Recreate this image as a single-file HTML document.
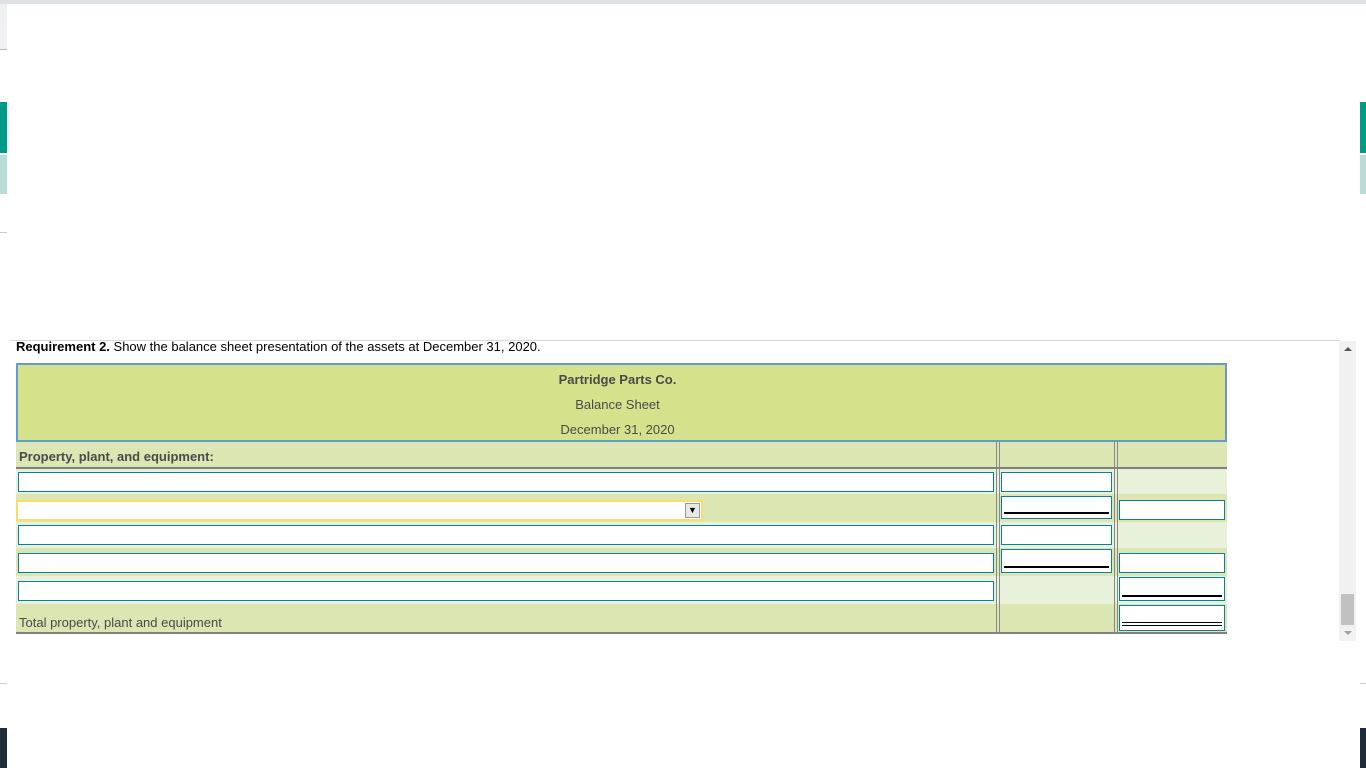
<!DOCTYPE html>
<html><head><style>
body{margin:0;width:1366px;height:768px;position:relative;overflow:hidden;background:#fff;font-family:"Liberation Sans",Arial,sans-serif;}
div{position:absolute;box-sizing:border-box;}
.in{background:#fff;border:1px solid #0e7f9a;}
.ul{border-bottom:2px solid #000;}
.t{font-size:13px;color:#4a4a4a;}
</style></head><body>
<div style="left:0;top:0;width:1366px;height:4px;background:#dee1e6"></div>
<div style="left:0;top:4px;width:7px;height:20px;background:#eef0f2"></div>
<div style="left:0;top:23px;width:7px;height:27px;background:#f0f1f3;border-bottom:1px solid #bbb"></div>
<div style="left:0;top:102px;width:7px;height:51px;background:#009b86"></div>
<div style="left:0;top:155px;width:7px;height:39px;background:#b9dcd6"></div>
<div style="left:0;top:232px;width:7px;height:1px;background:#ccc"></div>
<div style="left:1360px;top:102px;width:6px;height:51px;background:#009b86"></div>
<div style="left:1360px;top:155px;width:6px;height:39px;background:#b9dcd6"></div>
<div style="left:0;top:728px;width:7px;height:40px;background:#1e2b38"></div>
<div style="left:1360px;top:728px;width:6px;height:40px;background:#1e2b38"></div>
<div style="left:0;top:683px;width:7px;height:1px;background:#ccc"></div>
<div style="left:1360px;top:683px;width:6px;height:1px;background:#ccc"></div>

<div style="left:10px;top:340px;width:1330px;height:1px;background:#d5d9e0"></div>
<div style="left:16px;top:339px;font-size:13px;color:#000;line-height:15px"><b>Requirement 2.</b> Show the balance sheet presentation of the assets at December 31, 2020.</div>

<div style="left:1339px;top:341px;width:17px;height:300px;background:#f1f1f1"></div>
<div style="left:1341px;top:594px;width:13px;height:31px;background:#c1c1c1"></div>
<div style="left:1344px;top:347px;width:0;height:0;border-left:4px solid transparent;border-right:4px solid transparent;border-bottom:4px solid #555"></div>
<div style="left:1344px;top:631px;width:0;height:0;border-left:4px solid transparent;border-right:4px solid transparent;border-top:4px solid #a0a0a0"></div>

<div style="left:16px;top:363px;width:1211px;height:79px;background:#d6e18c;border:2px solid #6699cc"></div>
<div class="t" style="left:12px;width:1211px;top:372px;text-align:center;font-weight:bold">Partridge Parts Co.</div>
<div class="t" style="left:12px;width:1211px;top:397px;text-align:center">Balance Sheet</div>
<div class="t" style="left:12px;width:1211px;top:422px;text-align:center">December 31, 2020</div>

<div style="left:16px;top:442px;width:1211px;height:25px;background:#dbe6b2"></div>
<div style="left:16px;top:467px;width:1211px;height:2px;background:#808080"></div>
<div style="left:16px;top:469px;width:1211px;height:25px;background:#e8f1d9"></div>
<div style="left:16px;top:494px;width:1211px;height:28px;background:#dbe6b2"></div>
<div style="left:16px;top:522px;width:1211px;height:26px;background:#e8f1d9"></div>
<div style="left:16px;top:548px;width:1211px;height:28px;background:#dbe6b2"></div>
<div style="left:16px;top:576px;width:1211px;height:28px;background:#e8f1d9"></div>
<div style="left:16px;top:604px;width:1211px;height:29px;background:#dbe6b2"></div>
<div style="left:16px;top:632px;width:1211px;height:2px;background:#808080"></div>
<div style="left:996px;top:442px;width:4px;height:191px;border-left:1px solid #888;border-right:1px solid #888"></div>
<div style="left:1114px;top:442px;width:4px;height:191px;border-left:1px solid #888;border-right:1px solid #888"></div>

<div class="t" style="left:19px;top:449px;font-weight:bold">Property, plant, and equipment:</div>
<div class="t" style="left:19px;top:615px">Total property, plant and equipment</div>

<div class="in" style="left:18px;top:472px;width:976px;height:20px"></div>
<div class="in" style="left:1001px;top:472px;width:111px;height:20px"></div>

<div style="left:16px;top:500px;width:687px;height:21px;background:#fff;border:2px solid #f7de6a"></div>
<div style="left:685px;top:503px;width:15px;height:15px;background:#e8e8e8;border:1px solid #999;font-size:9px;line-height:13px;text-align:center">▼</div>
<div class="in" style="left:1001px;top:496px;width:111px;height:23px"><div class="ul" style="left:2px;right:2px;top:15px"></div></div>
<div class="in" style="left:1119px;top:500px;width:106px;height:20px"></div>

<div class="in" style="left:18px;top:525px;width:976px;height:20px"></div>
<div class="in" style="left:1001px;top:525px;width:111px;height:20px"></div>

<div class="in" style="left:18px;top:553px;width:976px;height:20px"></div>
<div class="in" style="left:1001px;top:549px;width:111px;height:24px"><div class="ul" style="left:2px;right:2px;top:16px"></div></div>
<div class="in" style="left:1119px;top:553px;width:106px;height:20px"></div>

<div class="in" style="left:18px;top:581px;width:976px;height:20px"></div>
<div class="in" style="left:1119px;top:577px;width:106px;height:24px"><div class="ul" style="left:2px;right:2px;top:17px"></div></div>

<div class="in" style="left:1119px;top:605px;width:106px;height:26px"><div style="left:2px;right:2px;top:16px;height:4px;border-top:1px solid #000;border-bottom:1px solid #000"></div></div>
</body></html>
